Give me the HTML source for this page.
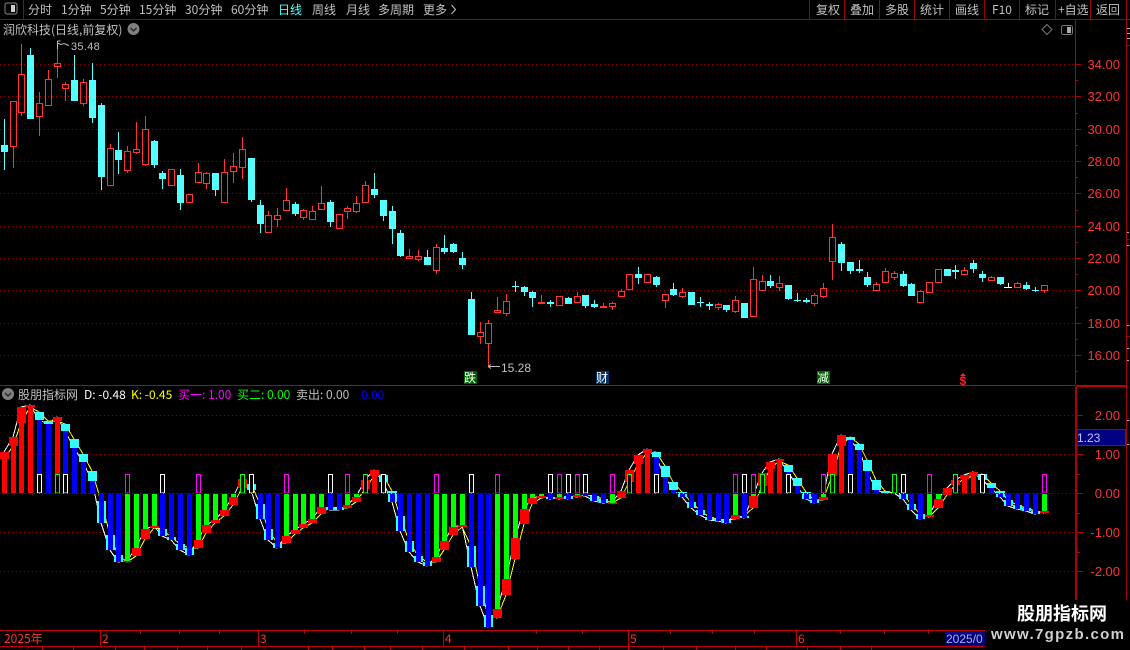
<!DOCTYPE html>
<html><head><meta charset="utf-8"><style>
html,body{margin:0;padding:0;background:#000;width:1130px;height:650px;overflow:hidden}
svg{display:block;position:absolute;left:0;top:0}
text{font-family:"WenQuanYi Zen Hei","Noto Sans CJK SC",sans-serif;font-size:12px;white-space:pre}
.n{font-family:"Liberation Sans",sans-serif;font-size:13px;fill:#ff3232;text-anchor:end}
.t{fill:#c0c0c0}
</style></head><body>
<svg width="1130" height="650" viewBox="0 0 1130 650" xmlns="http://www.w3.org/2000/svg">
<rect width="1130" height="650" fill="#000"/>
<g shape-rendering="crispEdges" fill="none">
<path stroke="#a00000" d="M0 19.5H1130M23.5 0V19M809.5 0V19M844.5 0V19M879.5 0V19M914.5 0V19M949.5 0V19M984.5 0V19M1019.5 0V19M1055.5 0V19M1090.5 0V19M1126.5 0V19M1126.5 19V600"/>
<path stroke="#900000" stroke-dasharray="1 3" d="M0 64.5H1075M0 96.5H1075M0 129.5H1075M0 161.5H1075M0 193.5H1075M0 226.5H1075M0 258.5H1075M0 290.5H1075M0 323.5H1075M0 355.5H1075M0 415.5H1075M0 454.5H1075M0 532.5H1075M0 571.5H1075"/>
<path stroke="#b00000" d="M1075.5 19V385M1075 64.5h6M1075 96.5h6M1075 129.5h6M1075 161.5h6M1075 193.5h6M1075 226.5h6M1075 258.5h6M1075 290.5h6M1075 323.5h6M1075 355.5h6M1075 80.5h3M1075 113.5h3M1075 145.5h3M1075 177.5h3M1075 210.5h3M1075 242.5h3M1075 274.5h3M1075 307.5h3M1075 339.5h3M1075 371.5h3"/>
<path stroke="#c00000" d="M0 385.5H1075M1076 385.5H1126M1076 386.5H1126"/>
<path stroke="#b00000" stroke-width="2" d="M1076 386V600"/>
<path stroke="#b00000" d="M1077 415.5h6M1077 454.5h6M1077 493.5h6M1077 532.5h6M1077 571.5h6M1077 435.5h3M1077 474.5h3M1077 513.5h3M1077 552.5h3"/>
<path stroke="#900000" d="M1127 45.5h3M1127 239.5h3M1127 336.5h3"/>
<path stroke="#aaa" d="M1127 28.5h3M1127 33.5h3M1127 38.5h3M1127 232.5h2M1127 245.5h2M1127 325.5h2M1127 348.5h2M1127 360.5h2M1127 420.5h2M1127 444.5h2"/>
<path stroke="#c00000" d="M0 630.5H985M0 646.5H985M100.5 630V646M258.5 630V646M443.5 630V646M628.5 630V650M796.5 630V646"/>
<path stroke="#c00000" d="M140.5 631v3M179.5 631v3M219.5 631v3M304.5 631v3M351.5 631v3M397.5 631v3M536.5 631v3M582.5 631v3M670.5 631v3M712.5 631v3M754.5 631v3M840.5 631v3M884.5 631v3M928.5 631v3M42.5 647v3M73.5 647v3M115.5 647v3M144.5 647v3M177.5 647v3M207.5 647v3M241.5 647v3M308.5 647v3M332.5 647v3M364.5 647v3M390.5 647v3M422.5 647v3M464.5 647v3M508.5 647v3M537.5 647v3M568.5 647v3M599.5 647v3M663.5 647v3M696.5 647v3M735.5 647v3M766.5 647v3M807.5 647v3M840.5 647v3M871.5 647v3"/>

<!-- red hollow candles -->
<path stroke="#ff3232" d="M10.5 101.5h6V146.5h-6zM13.5 146V168
M18.5 74.5h6V112.5h-6zM21.5 44V74M21.5 112V116
M36.5 103.5h6V116.5h-6zM39.5 92V103M39.5 116V136
M45.5 79.5h6V105.5h-6zM48.5 70V79
M54.5 63.5h6V66.5h-6zM57.5 42V63M57.5 66V78
M62.5 84.5h6V88.5h-6zM65.5 82V84M65.5 88V101
M80.5 82.5h6V103.5h-6zM83.5 79V82M83.5 103V106
M107.5 148.5h6V185.5h-6zM110.5 144V148
M124.5 151.5h6V170.5h-6zM127.5 146V151M127.5 170V173
M133.5 149.5h6V152.5h-6zM136.5 122V149M136.5 152V154
M142.5 129.5h6V164.5h-6zM145.5 116V129M145.5 164V166
M168.5 169.5h6V185.5h-6z
M186.5 194.5h6V202.5h-6z
M195.5 172.5h6V182.5h-6zM198.5 163V172M198.5 182V183
M203.5 173.5h6V183.5h-6zM206.5 172V173M206.5 183V189
M221.5 172.5h6V202.5h-6zM224.5 159V172M224.5 202V203
M230.5 166.5h6V171.5h-6zM233.5 153V166M233.5 171V183
M239.5 149.5h6V167.5h-6zM242.5 137V149M242.5 167V179
M265.5 215.5h6V232.5h-6zM268.5 211V215M268.5 232V233
M274.5 215.5h6V219.5h-6zM277.5 208V215M277.5 219V227
M283.5 200.5h6V210.5h-6zM286.5 188V200M286.5 210V211
M300.5 210.5h6V217.5h-6zM303.5 209V210M303.5 217V220
M309.5 211.5h6V219.5h-6zM312.5 206V211
M318.5 203.5h6V209.5h-6zM321.5 186V203M321.5 209V210
M336.5 214.5h6V228.5h-6z
M344.5 208.5h6V211.5h-6zM347.5 206V208M347.5 211V219
M353.5 203.5h6V211.5h-6zM356.5 196V203M356.5 211V213
M362.5 185.5h6V202.5h-6zM365.5 181V185
M406.5 256.5h6V258.5h-6zM409.5 249V256
M415.5 256.5h6V259.5h-6zM418.5 250V256M418.5 259V261
M433.5 247.5h6V270.5h-6zM436.5 244V247M436.5 270V274
M477.5 332.5h6V336.5h-6zM480.5 322V332M480.5 336V344
M485.5 323.5h6V343.5h-6zM488.5 320V323M488.5 343V366
M494.5 310.5h6V312.5h-6zM497.5 297V310
M503.5 301.5h6V313.5h-6zM506.5 294V301M506.5 313V316
M538.5 302.5h6V303.5h-6zM541.5 295V302M541.5 303V304
M556.5 296.5h6V305.5h-6z
M574.5 296.5h6V302.5h-6zM577.5 292V296
M600.5 306.5h6V307.5h-6zM603.5 303V306
M609.5 303.5h6V306.5h-6zM612.5 302V303M612.5 306V310
M618.5 291.5h6V296.5h-6zM621.5 289V291M621.5 296V297
M626.5 274.5h6V289.5h-6z
M644.5 274.5h6V282.5h-6z
M662.5 294.5h6V300.5h-6zM665.5 300V308
M679.5 292.5h6V296.5h-6zM682.5 288V292M682.5 296V298
M715.5 304.5h6V307.5h-6zM718.5 303V304M718.5 307V310
M732.5 300.5h6V311.5h-6zM735.5 296V300M735.5 311V313
M750.5 279.5h6V316.5h-6zM753.5 267V279
M759.5 281.5h6V290.5h-6zM762.5 275V281M762.5 290V291
M776.5 283.5h6V287.5h-6zM779.5 276V283M779.5 287V291
M811.5 295.5h6V303.5h-6zM814.5 293V295M814.5 303V306
M820.5 288.5h6V296.5h-6zM823.5 283V288M823.5 296V298
M829.5 237.5h6V261.5h-6zM832.5 224V237M832.5 261V280
M873.5 284.5h6V290.5h-6zM876.5 282V284
M882.5 271.5h6V282.5h-6zM885.5 268V271M885.5 282V283
M891.5 273.5h6V277.5h-6zM894.5 271V273M894.5 277V280
M917.5 291.5h6V302.5h-6zM920.5 290V291
M926.5 282.5h6V292.5h-6z
M935.5 269.5h6V282.5h-6z
M961.5 270.5h6V274.5h-6zM964.5 267V270
M988.5 277.5h6V280.5h-6zM991.5 276V277M991.5 280V281
M1014.5 283.5h6V287.5h-6zM1017.5 282V283
M1041.5 285.5h6V290.5h-6zM1044.5 290V293"/>
<path stroke="#fff" d="M1008.5 283V288M1004 287.5h8"/>
</g>
<!-- cyan candles -->
<path shape-rendering="crispEdges" fill="#54ffff" d="M1 145h7V152h-7zM4 119h1V170h-1z
M27 55h7V119h-7zM30 48h1V119h-1z
M71 80h7V101h-7zM74 55h1V101h-1z
M89 80h7V118h-7zM92 63h1V123h-1z
M98 105h7V177h-7zM101 103h1V190h-1z
M115 150h7V160h-7zM118 132h1V174h-1z
M151 141h7V165h-7zM154 140h1V168h-1z
M159 173h7V179h-7zM162 171h1V189h-1z
M177 175h7V203h-7zM180 169h1V210h-1z
M212 173h7V190h-7zM215 173h1V196h-1z
M248 158h7V200h-7zM251 158h1V202h-1z
M257 205h7V224h-7zM260 200h1V233h-1z
M292 204h7V214h-7zM295 202h1V216h-1z
M327 202h7V222h-7zM330 200h1V227h-1z
M371 189h7V195h-7zM374 173h1V198h-1z
M380 200h7V216h-7zM383 200h1V221h-1z
M389 211h7V229h-7zM392 206h1V244h-1z
M397 233h7V256h-7zM400 230h1V257h-1z
M424 257h7V265h-7zM427 250h1V265h-1z
M441 248h7V252h-7zM444 235h1V254h-1z
M450 244h7V252h-7zM453 243h1V253h-1z
M459 258h7V265h-7zM462 252h1V269h-1z
M468 299h7V335h-7zM471 292h1V335h-1z
M512 286h7V287h-7zM515 281h1V292h-1z
M521 287h7V292h-7zM524 286h1V296h-1z
M529 292h7V298h-7zM532 291h1V307h-1z
M547 302h7V304h-7zM550 300h1V307h-1z
M565 298h7V304h-7zM568 297h1V304h-1z
M582 295h7V306h-7zM585 295h1V308h-1z
M591 304h7V307h-7zM594 300h1V308h-1z
M635 274h7V278h-7zM638 267h1V284h-1z
M653 277h7V285h-7zM656 276h1V287h-1z
M670 289h7V295h-7zM673 283h1V296h-1z
M688 292h7V305h-7z
M697 302h7V303h-7zM700 297h1V307h-1z
M706 304h7V306h-7zM709 302h1V310h-1z
M723 305h7V310h-7zM726 305h1V312h-1z
M741 303h7V318h-7z
M767 281h7V286h-7zM770 275h1V288h-1z
M785 285h7V299h-7zM788 285h1V300h-1z
M794 300h7V301h-7zM797 293h1V302h-1z
M803 300h7V302h-7zM806 298h1V303h-1z
M838 244h7V263h-7zM841 242h1V271h-1z
M847 262h7V271h-7zM850 262h1V274h-1z
M856 269h7V271h-7zM859 260h1V273h-1z
M864 277h7V285h-7zM867 272h1V287h-1z
M900 274h7V286h-7zM903 271h1V287h-1z
M908 284h7V296h-7zM911 283h1V296h-1z
M944 269h7V276h-7z
M952 270h7V272h-7zM955 265h1V279h-1z
M970 263h7V269h-7zM973 260h1V273h-1z
M979 274h7V278h-7zM982 271h1V282h-1z
M997 277h7V284h-7zM1000 277h1V285h-1z
M1023 285h7V289h-7zM1026 282h1V290h-1z
M1032 290h7V291h-7zM1035 287h1V292h-1z"/>

<!-- indicator lines -->
<g fill="none" shape-rendering="crispEdges">
<polyline stroke="#ffff00" points="4,459 13,446 21,423 30,407 39,412 48,421 57,421 65,424 74,439 83,454 92,471 101,501 110,535 118,555 127,562 136,556 145,539 154,528 162,529 171,537 180,544 189,548 198,548 206,533 215,523 224,516 233,505 242,488 251,484 260,504 268,529 277,543 286,543 295,534 303,528 312,523 321,514 330,507 339,508 347,508 356,502 365,489 374,476 383,475 392,491 400,516 409,541 418,556 427,562 436,562 444,550 453,535 462,527 471,546 480,586 488,615 497,618 506,595 515,559 524,524 532,504 541,498 550,497 559,499 568,496 577,497 585,495 594,496 603,499 612,503 621,498 629,482 638,464 647,453 656,452 665,466 673,482 682,492 691,502 700,510 709,517 718,519 726,520 735,519 744,516 753,508 762,486 770,469 779,461 788,465 797,478 806,492 814,500 823,500 832,476 841,446 850,437 859,444 867,460 876,480 885,491 894,493 903,494 911,504 920,514 929,517 938,508 947,495 955,485 964,479 973,476 982,474 991,483 1000,491 1008,500 1017,505 1026,508 1035,511 1044,513"/>
<polyline stroke="#ffffff" points="4,452 13,437 21,407 30,405 39,420 48,424 57,417 65,431 74,448 83,462 92,481 101,523 110,550 118,562 127,561 136,548 145,529 154,526 162,536 171,540 180,550 189,555 198,540 206,525 215,520 224,510 233,497 242,479 251,490 260,519 268,540 277,548 286,536 295,530 303,524 312,519 321,507 330,510 339,510 347,505 356,497 365,480 374,470 383,482 392,502 400,531 409,552 418,562 427,566 436,557 444,541 453,527 462,525 471,567 480,606 488,627 497,609 506,579 515,538 524,509 532,498 541,496 550,499 559,497 568,499 577,495 585,496 594,501 603,503 612,502 621,491 629,470 638,455 647,449 656,457 665,477 673,490 682,497 691,508 700,515 709,520 718,521 726,523 735,515 744,518 753,496 762,473 770,462 779,459 788,472 797,486 806,499 814,503 823,497 832,454 841,435 850,440 859,450 867,471 876,490 885,493 894,493 903,499 911,510 920,519 929,515 938,499 947,488 955,480 964,475 973,472 982,480 991,488 1000,497 1008,506 1017,509 1026,511 1035,514 1044,511"/>
</g>

<g shape-rendering="crispEdges">
<!-- cyan blocks -->
<path fill="#33ffff" d="M35 412h9V420h-9zM44 421h9V424h-9zM61 424h9V431h-9zM70 439h9V448h-9zM79 454h9V462h-9zM88 471h9V481h-9zM97 501h9V523h-9zM106 535h9V550h-9zM114 555h9V562h-9zM158 529h9V536h-9zM167 537h9V540h-9zM176 544h9V550h-9zM185 548h9V555h-9zM247 484h9V490h-9zM256 504h9V519h-9zM264 529h9V540h-9zM273 543h9V548h-9zM326 507h9V510h-9zM335 508h9V510h-9zM379 475h9V482h-9zM388 491h9V502h-9zM396 516h9V531h-9zM405 541h9V552h-9zM414 556h9V562h-9zM423 562h9V566h-9zM467 546h9V567h-9zM476 586h9V606h-9zM484 615h9V627h-9zM546 497h9V499h-9zM564 496h9V499h-9zM581 495h9V496h-9zM590 496h9V501h-9zM599 499h9V503h-9zM652 452h9V457h-9zM661 466h9V477h-9zM669 482h9V490h-9zM678 492h9V497h-9zM687 502h9V508h-9zM696 510h9V515h-9zM705 517h9V520h-9zM714 519h9V521h-9zM722 520h9V523h-9zM740 516h9V518h-9zM784 465h9V472h-9zM793 478h9V486h-9zM802 492h9V499h-9zM810 500h9V503h-9zM846 437h9V440h-9zM855 444h9V450h-9zM863 460h9V471h-9zM872 480h9V490h-9zM881 491h9V493h-9zM899 494h9V499h-9zM907 504h9V510h-9zM916 514h9V519h-9zM978 474h9V480h-9zM987 483h9V488h-9zM996 491h9V497h-9zM1004 500h9V506h-9zM1013 505h9V509h-9zM1022 508h9V511h-9zM1031 511h9V514h-9z"/>
<!-- red blocks and red thin bars -->
<path fill="#ff0000" d="M0 452h9V459h-9zM2 452h5V493h-5zM9 437h9V446h-9zM11 437h5V493h-5zM17 407h9V423h-9zM19 407h5V493h-5zM26 405h9V407h-9zM28 405h5V493h-5zM53 417h9V421h-9zM55 417h5V474h-5z
M238 479h9V488h-9zM240 479h5V493h-5zM361 480h9V489h-9zM363 480h5V493h-5zM370 470h9V476h-9zM372 470h5V493h-5zM617 491h9V498h-9zM625 470h9V482h-9zM627 470h5V493h-5zM634 455h9V464h-9zM636 455h5V493h-5zM643 449h9V453h-9zM645 449h5V493h-5zM758 473h9V486h-9zM760 473h5V493h-5zM766 462h9V469h-9zM768 462h5V493h-5zM775 459h9V461h-9zM777 459h5V493h-5zM828 454h9V476h-9zM830 454h5V493h-5zM837 435h9V446h-9zM839 435h5V493h-5zM943 488h9V495h-9zM951 480h9V485h-9zM953 480h5V493h-5zM960 475h9V479h-9zM962 475h5V493h-5zM969 472h9V476h-9zM971 472h5V493h-5z
M123 561h9V562h-9zM132 548h9V556h-9zM141 529h9V539h-9zM150 526h9V528h-9zM194 540h9V548h-9zM202 525h9V533h-9zM211 520h9V523h-9zM220 510h9V516h-9zM229 497h9V505h-9zM282 536h9V543h-9zM291 530h9V534h-9zM299 524h9V528h-9zM308 519h9V523h-9zM317 507h9V514h-9zM343 505h9V508h-9zM352 497h9V502h-9zM432 557h9V562h-9zM440 541h9V550h-9zM449 527h9V535h-9zM458 525h9V527h-9zM493 609h9V618h-9zM502 579h9V595h-9zM511 538h9V559h-9zM520 509h9V524h-9zM528 498h9V504h-9zM537 496h9V498h-9zM555 497h9V499h-9zM573 495h9V497h-9zM608 502h9V504h-9zM731 515h9V519h-9zM749 496h9V508h-9zM819 497h9V500h-9zM925 515h9V517h-9zM934 499h9V508h-9zM1040 511h9V513h-9z"/>
<!-- green thin bars -->
<path fill="#00ff00" d="M125 494h5V561h-5zM134 494h5V548h-5zM143 494h5V529h-5zM152 494h5V526h-5zM196 494h5V540h-5zM204 494h5V525h-5zM213 494h5V520h-5zM222 494h5V510h-5zM231 494h5V497h-5zM284 494h5V536h-5zM293 494h5V530h-5zM301 494h5V524h-5zM310 494h5V519h-5zM319 494h5V507h-5zM345 494h5V505h-5zM354 494h5V497h-5zM434 494h5V557h-5zM442 494h5V541h-5zM451 494h5V527h-5zM460 494h5V525h-5zM495 494h5V609h-5zM504 494h5V579h-5zM513 494h5V538h-5zM522 494h5V509h-5zM530 494h5V498h-5zM539 494h5V496h-5zM557 494h5V497h-5zM575 494h5V495h-5zM610 494h5V503h-5zM733 494h5V515h-5zM751 494h5V496h-5zM821 494h5V497h-5zM927 494h5V515h-5zM936 494h5V499h-5zM1042 494h5V511h-5z"/>
<!-- blue thin bars -->
<path fill="#0000ff" d="M37 420h5V493h-5zM46 424h5V493h-5zM63 431h5V493h-5zM72 448h5V493h-5zM81 462h5V493h-5zM90 481h5V493h-5zM99 494h5V523h-5zM108 494h5V550h-5zM116 494h5V562h-5zM160 494h5V536h-5zM169 494h5V540h-5zM178 494h5V550h-5zM187 494h5V555h-5zM249 490h5V493h-5zM258 494h5V519h-5zM266 494h5V540h-5zM275 494h5V548h-5zM328 494h5V510h-5zM337 494h5V510h-5zM381 482h5V493h-5zM390 494h5V502h-5zM398 494h5V531h-5zM407 494h5V552h-5zM416 494h5V562h-5zM425 494h5V566h-5zM469 494h5V567h-5zM478 494h5V606h-5zM486 494h5V627h-5zM548 494h5V499h-5zM566 494h5V499h-5zM583 494h5V496h-5zM592 494h5V501h-5zM601 494h5V503h-5zM654 457h5V493h-5zM663 477h5V493h-5zM671 490h5V493h-5zM680 494h5V497h-5zM689 494h5V508h-5zM698 494h5V515h-5zM707 494h5V520h-5zM716 494h5V521h-5zM724 494h5V523h-5zM742 494h5V518h-5zM786 472h5V493h-5zM795 486h5V493h-5zM804 494h5V499h-5zM812 494h5V503h-5zM848 440h5V493h-5zM857 450h5V493h-5zM865 471h5V493h-5zM874 490h5V493h-5zM901 494h5V499h-5zM909 494h5V510h-5zM918 494h5V519h-5zM980 480h5V493h-5zM989 488h5V493h-5zM998 494h5V497h-5zM1006 494h5V506h-5zM1015 494h5V509h-5zM1024 494h5V511h-5zM1033 494h5V514h-5z"/>
<!-- marker outlines -->
<path fill="#000" stroke="#fff" d="M37.5 474.5h4V493h-4zM63.5 474.5h4V493h-4zM160.5 474.5h4V493h-4zM249.5 474.5h4V493h-4zM328.5 474.5h4V493h-4zM381.5 474.5h4V493h-4zM469.5 474.5h4V493h-4zM548.5 474.5h4V493h-4zM566.5 474.5h4V493h-4zM583.5 474.5h4V493h-4zM654.5 474.5h4V493h-4zM742.5 474.5h4V493h-4zM786.5 474.5h4V493h-4zM848.5 474.5h4V493h-4zM901.5 474.5h4V493h-4zM980.5 474.5h4V493h-4z"/>
<path fill="#000" stroke="#ff00ff" d="M125.5 474.5h4V493h-4zM196.5 474.5h4V493h-4zM284.5 474.5h4V493h-4zM345.5 474.5h4V493h-4zM434.5 474.5h4V493h-4zM495.5 474.5h4V493h-4zM557.5 474.5h4V493h-4zM575.5 474.5h4V493h-4zM610.5 474.5h4V493h-4zM733.5 474.5h4V493h-4zM751.5 474.5h4V493h-4zM821.5 474.5h4V493h-4zM927.5 474.5h4V493h-4zM1042.5 474.5h4V493h-4z"/>
<path fill="#000" stroke="#00ff00" d="M55.5 474.5h4V493h-4zM240.5 474.5h4V493h-4zM363.5 474.5h4V493h-4zM627.5 474.5h4V493h-4zM760.5 474.5h4V493h-4zM830.5 474.5h4V493h-4zM892.5 474.5h4V493h-4zM953.5 474.5h4V493h-4z"/>
<path fill="none" stroke="#0000ff" stroke-dasharray="3 1" d="M0 493.5H1050"/>
<path fill="none" stroke="#900000" stroke-dasharray="1 3" d="M1050 493.5H1075"/>
</g>

<!-- toolbar -->
<rect x="5" y="3" width="12" height="11" rx="2" fill="none" stroke="#888"/>
<rect x="11" y="5" width="4" height="7" fill="#ccc"/>
<g class="t">
<text x="28" y="14" class="t">分时</text>
<text x="61" y="14" class="t">1分钟</text>
<text x="100" y="14" class="t">5分钟</text>
<text x="139" y="14" class="t">15分钟</text>
<text x="185" y="14" class="t">30分钟</text>
<text x="231" y="14" class="t">60分钟</text>
<text x="278" y="14" fill="#54ffff">日线</text>
<text x="312" y="14" class="t">周线</text>
<text x="346" y="14" class="t">月线</text>
<text x="378" y="14" class="t">多周期</text>
<text x="423" y="14" class="t">更多</text>
<text x="816" y="14" class="t">复权</text>
<text x="850" y="14" class="t">叠加</text>
<text x="885" y="14" class="t">多股</text>
<text x="920" y="14" class="t">统计</text>
<text x="955" y="14" class="t">画线</text>
<text x="992" y="14" class="t">F10</text>
<text x="1025" y="14" class="t">标记</text>
<text x="1058" y="14" class="t">+自选</text>
<text x="1096" y="14" class="t">返回</text>
</g>
<path d="M451.5 5l4 4.5-4 4.5" fill="none" stroke="#c0c0c0"/>

<!-- header -->
<text x="3" y="34" class="t">润欣科技(日线,前复权)</text>
<circle cx="133.500" cy="29" r="6" fill="#808080"/>
<path d="M130.500 28l3 3 3-3" fill="none" stroke="#222" stroke-width="1.300"/>
<path d="M1047 24.500l5 5-5 5-5-5z" fill="none" stroke="#777"/>
<rect x="1061.500" y="25.500" width="11" height="9" rx="2" fill="none" stroke="#777"/>
<rect x="1067" y="27" width="4" height="6" fill="#aaa"/>
<text x="71" y="50" fill="#c0c0c0" style="font-family:'Liberation Sans',sans-serif;font-size:11px;letter-spacing:.3px">35.48</text>
<path d="M57.500 41v8M57.500 41h3M57 43l4 1.500 3-1 5 2" fill="none" stroke="#bbb"/>
<text x="501" y="372" fill="#c0c0c0" style="font-family:'Liberation Sans',sans-serif;font-size:12px">15.28</text>
<path d="M488 366.500h12M488 366.500l3-2M488 366.500l3 2" fill="none" stroke="#bbb"/>

<!-- signal labels -->
<rect x="464" y="371" width="13" height="13" fill="#006400"/>
<text x="464" y="382" fill="#fff">跌</text>
<rect x="596" y="371" width="13" height="13" fill="#003366"/>
<text x="596" y="382" fill="#fff">财</text>
<rect x="817" y="371" width="13" height="13" fill="#006400"/>
<text x="817" y="382" fill="#fff">减</text>
<path d="M963 373l3 3h-6z" fill="#ff2020"/>
<text x="959.500" y="385" fill="#ff2020" style="font-family:'Liberation Sans',sans-serif;font-size:12px;font-weight:bold">$</text>

<!-- indicator header -->
<circle cx="8" cy="394" r="6" fill="#808080"/>
<path d="M5 393l3 3 3-3" fill="none" stroke="#222" stroke-width="1.300"/>
<text x="18" y="399" class="t">股朋指标网</text>
<text x="84" y="399" fill="#fff">D: -0.48</text>
<text x="131" y="399" fill="#ffff00">K: -0.45</text>
<text x="178" y="399" fill="#ff00ff">买一: 1.00</text>
<text x="237" y="399" fill="#00ff00">买二: 0.00</text>
<text x="296" y="399" class="t">卖出: 0.00</text>
<text x="361" y="399" fill="#0000ff">0.00</text>

<!-- axis labels -->
<text x="1120" y="69" class="n">34.00</text>
<text x="1120" y="101" class="n">32.00</text>
<text x="1120" y="134" class="n">30.00</text>
<text x="1120" y="166" class="n">28.00</text>
<text x="1120" y="198" class="n">26.00</text>
<text x="1120" y="231" class="n">24.00</text>
<text x="1120" y="263" class="n">22.00</text>
<text x="1120" y="295" class="n">20.00</text>
<text x="1120" y="328" class="n">18.00</text>
<text x="1120" y="360" class="n">16.00</text>
<text x="1120" y="420" class="n">2.00</text>
<text x="1120" y="459" class="n">1.00</text>
<text x="1120" y="498" class="n">0.00</text>
<text x="1120" y="537" class="n">-1.00</text>
<text x="1120" y="576" class="n">-2.00</text>
<rect x="1076.500" y="429.500" width="49" height="16" fill="#000080" stroke="#b00000"/>
<text x="1077" y="442" fill="#c0c0ff" style="font-family:'Liberation Sans',sans-serif;font-size:12px">1.23</text>

<!-- date axis -->
<text x="4" y="643" fill="#ff3232">2025年</text>
<text x="102" y="643" fill="#ff3232">2</text>
<text x="260" y="643" fill="#ff3232">3</text>
<text x="445" y="643" fill="#ff3232">4</text>
<text x="630" y="643" fill="#ff3232">5</text>
<text x="798" y="643" fill="#ff3232">6</text>

<!-- watermark -->
<rect x="985" y="600" width="145" height="50" fill="#000"/>
<rect x="945" y="631" width="40" height="15" fill="#000080"/>
<svg x="945" y="631" width="39" height="15"><text x="1" y="12" fill="#b0b0d8" style="font-family:'Liberation Sans',sans-serif;font-size:12px">2025/0</text></svg>
<text x="1017" y="620" fill="#fff" style="font-family:'Noto Sans CJK SC',sans-serif;font-size:18px;font-weight:bold">股朋指标网</text>
<text x="991" y="639" fill="#d0d0d0" textLength="133" lengthAdjust="spacing" style="font-family:'Liberation Sans',sans-serif;font-size:15px;font-weight:bold">www.7gpzb.com</text>
</svg>
</body></html>
